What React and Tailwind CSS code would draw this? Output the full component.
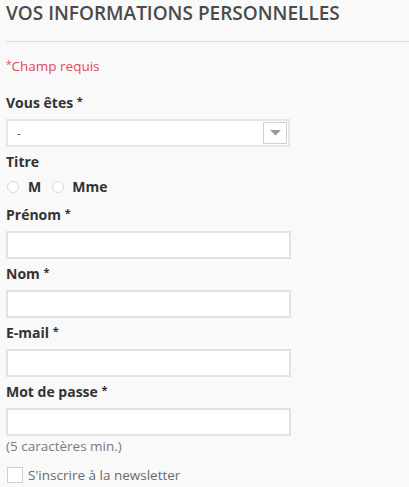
export default function App() {
  const font = { fontFamily: '"Open Sans", "Noto Sans", sans-serif' };
  const label = 'block h-[19px] text-[14px] font-bold text-[#333] leading-[19px]';
  const input = 'block w-[285px] h-[28px] bg-white border-2 border-[#e2e2e2]';
  const star = <span className="relative -top-[3px] text-[11px] leading-none">*</span>;

  return (
    <div className="min-h-[487px] w-[409px] bg-[#f9f9f9] pl-[6px]" style={font}>
      <h1 className="h-[26px] text-[19px] font-semibold text-[#4a4a4a] leading-[26px]">
        VOS INFORMATIONS PERSONNELLES
      </h1>
      <div className="mt-[15px] h-px bg-[#dcdcdc]" />

      <p className="mt-[15px] h-[18px] text-[13.5px] text-[#e0475d] leading-[18px]">
        <span className="relative -top-[3px] text-[10px] leading-none">*</span>Champ requis
      </p>

      <div className="mt-[18px]">
        <label className={label}>Vous êtes {star}</label>
        <div className="mt-[7px] flex w-[284px] h-[28px] items-center justify-between bg-white border-2 border-[#e6e6e6]">
          <span className="pl-[9px] text-[11px] text-[#333]">-</span>
          <div className="mr-px flex h-[22px] w-[24px] items-center justify-center border border-[#d0d0d0]">
            <svg width="11" height="6" viewBox="0 0 11 6">
              <polygon points="0,0 11,0 5.5,5.5" fill="#9a9a9a" />
            </svg>
          </div>
        </div>
      </div>

      <div className="mt-[5px]">
        <label className={label}>Titre</label>
        <div className="mt-[6px] flex h-[19px] items-center text-[14px] font-bold text-[#333] leading-[19px]">
          <span className="ml-px h-[12px] w-[12px] rounded-full border border-[#d8d8d8] bg-white" />
          <span className="ml-[9px]">M</span>
          <span className="ml-[11px] h-[12px] w-[12px] rounded-full border border-[#d8d8d8] bg-white" />
          <span className="ml-[8px]">Mme</span>
        </div>
      </div>

      <div className="mt-[9px]">
        <label className={label}>Prénom {star}</label>
        <div className={`mt-[7px] ${input}`} />
      </div>

      <div className="mt-[5px]">
        <label className={label}>Nom {star}</label>
        <div className={`mt-[7px] ${input}`} />
      </div>

      <div className="mt-[5px]">
        <label className={label}>E-mail {star}</label>
        <div className={`mt-[7px] ${input}`} />
      </div>

      <div className="mt-[5px]">
        <label className={label}>Mot de passe {star}</label>
        <div className={`mt-[7px] ${input}`} />
        <p className="mt-[1px] h-[18px] text-[13.5px] text-[#7a7a7a] leading-[18px]">(5 caractères min.)</p>
      </div>

      <div className="mt-[11px] flex items-center">
        <span className="ml-px h-[16px] w-[16px] border border-[#cfcfcf] bg-white" />
        <span className="ml-[5px] text-[13.5px] text-[#6a6a6a] leading-[18px]">S'inscrire à la newsletter</span>
      </div>
    </div>
  );
}
